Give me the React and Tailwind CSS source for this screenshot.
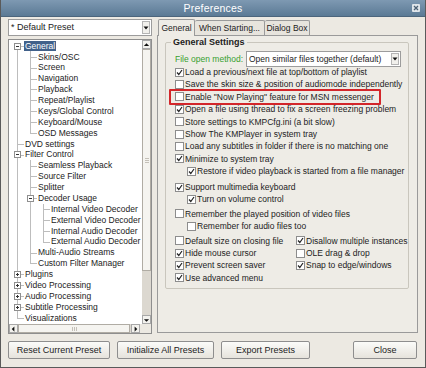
import React from 'react';

const treeData = [
  {
    label: 'General',
    open: true,
    selected: true,
    children: ['Skins/OSC', 'Screen', 'Navigation', 'Playback', 'Repeat/Playlist', 'Keys/Global Control', 'Keyboard/Mouse', 'OSD Messages'],
  },
  { label: 'DVD settings' },
  {
    label: 'Filter Control',
    open: true,
    children: [
      'Seamless Playback',
      'Source Filter',
      'Splitter',
      {
        label: 'Decoder Usage',
        open: true,
        children: ['Internal Video Decoder', 'External Video Decoder', 'Internal Audio Decoder', 'External Audio Decoder'],
      },
      'Multi-Audio Streams',
      'Custom Filter Manager',
    ],
  },
  { label: 'Plugins', closed: true },
  { label: 'Video Processing', closed: true },
  { label: 'Audio Processing', closed: true },
  { label: 'Subtitle Processing', closed: true },
  { label: 'Visualizations' },
];

// flatten the tree into rows, keeping which ancestor lines continue
function flatten(nodes, trail = [], out = []) {
  nodes.forEach((n, i) => {
    const node = typeof n === 'string' ? { label: n } : n;
    const last = i === nodes.length - 1;
    out.push({ ...node, trail, last, first: trail.length === 0 && i === 0 });
    if (node.open && node.children) flatten(node.children, [...trail, !last], out);
  });
  return out;
}

const rows = flatten(treeData);

function TreeRow({ row }) {
  return (
    <div className="flex h-[10.88px] items-stretch">
      {row.trail.map((more, i) => (
        <span key={i} className="relative w-[13px] shrink-0">
          {more && <span className="absolute left-[6px] top-0 bottom-0 border-l border-[#bdbdbd]" />}
        </span>
      ))}
      <span className="relative w-[13px] shrink-0">
        <span
          className={`absolute left-[6px] border-l border-[#bdbdbd] ${row.first ? 'top-1/2' : 'top-0'} ${row.last ? 'h-1/2' : 'bottom-0'}`}
        />
        <span className="absolute left-[6px] top-1/2 w-[7px] border-t border-[#bdbdbd]" />
        {(row.open || row.closed) && (
          <span className="absolute left-[3px] top-[2px] w-[7px] h-[7px] border border-[#8f8f8f] bg-white flex items-center justify-center">
            <span className="relative w-[3px] h-[3px] flex items-center justify-center">
              <span className="w-[3px] h-px bg-[#333]" />
              {row.closed && <span className="absolute w-px h-[3px] bg-[#333]" />}
            </span>
          </span>
        )}
      </span>
      <span
        className={`flex items-center px-[1px] whitespace-nowrap leading-none ${row.selected ? 'bg-[#41618a] text-white' : 'text-[#222]'}`}
      >
        {row.label}
      </span>
    </div>
  );
}

function Arrow({ dir }) {
  const paths = {
    up: 'M1 5 L4 2 L7 5 Z',
    down: 'M1 3 L4 6 L7 3 Z',
    left: 'M5 1 L2 4 L5 7 Z',
    right: 'M3 1 L6 4 L3 7 Z',
  };
  return (
    <span className="w-[9px] h-[9px] shrink-0 bg-[#f3f2ee] border border-[#a8a8a8] flex items-center justify-center">
      <svg width="8" height="8" viewBox="0 0 8 8">
        <path d={paths[dir]} fill="#111" />
      </svg>
    </span>
  );
}

function Check({ checked }) {
  return (
    <span className="w-[9px] h-[9px] shrink-0 border border-[#8d8d8d] bg-white flex items-center justify-center">
      {checked && (
        <svg width="7" height="7" viewBox="0 0 7 7">
          <path d="M1 3.5 L2.8 5.5 L6 1" fill="none" stroke="#222" strokeWidth="1.2" />
        </svg>
      )}
    </span>
  );
}

function Option({ label, checked, indent }) {
  return (
    <div className={`flex items-center h-[12.4px] gap-[1px] ${indent ? 'pl-[12px]' : ''}`}>
      <Check checked={checked} />
      <span className="whitespace-nowrap leading-none">{label}</span>
    </div>
  );
}

function Button({ children, width }) {
  return (
    <button
      className={`${width} h-[18px] rounded-[2px] border border-[#8e8e8e] bg-gradient-to-b from-[#fbfbf9] to-[#e6e3dc] text-[#222] leading-none`}
    >
      {children}
    </button>
  );
}

function DropArrow({ h }) {
  return (
    <span className={`w-[8px] ${h} mr-[1px] border border-[#b4b4b4] bg-[#f1f0ec] flex items-center justify-center shrink-0`}>
      <svg width="6" height="4" viewBox="0 0 6 4">
        <path d="M0.5 0.5 L5.5 0.5 L3 3.5 Z" fill="#111" />
      </svg>
    </span>
  );
}

export default function App() {
  return (
    <div className="w-[426px] h-[368px] flex flex-col bg-[#ece9e2] border-x border-b border-[#5a5a5a] font-['Liberation_Sans',Arial,sans-serif] text-[8.5px] text-[#222] overflow-hidden">
      {/* Title bar */}
      <div className="h-[17px] shrink-0 flex items-center justify-center relative bg-gradient-to-b from-[#7e99b2] to-[#5b7a95] border-b border-[#4c657c]">
        <span className="text-white text-[10.5px] leading-none tracking-[0.2px]">Preferences</span>
        <span className="absolute right-[5px] top-[4px] w-[8px] h-[8px] rounded-[1px] bg-[#dfe5ea] flex items-center justify-center">
          <svg width="6" height="6" viewBox="0 0 6 6">
            <path d="M1 1 L5 5 M5 1 L1 5" stroke="#4b6074" strokeWidth="1.3" />
          </svg>
        </span>
      </div>

      <div className="flex pl-[7px] pt-[2px] gap-[5px]">
        {/* Left column */}
        <div className="w-[144px] flex flex-col">
          <div className="h-[17px] flex items-center border border-[#9c9c9c] bg-white">
            <span className="flex-1 pl-[2px] text-[9px] leading-none">* Default Preset</span>
            <DropArrow h="h-[13px]" />
          </div>

          <div className="mt-[3px] h-[295px] border border-[#8e8e8e] bg-white flex flex-col">
            <div className="flex flex-1 min-h-0">
              <div className="flex-1 pl-[2px] pt-[0.5px] overflow-hidden">
                {rows.map((r, i) => (
                  <TreeRow key={i} row={r} />
                ))}
              </div>
              <div className="w-[9px] flex flex-col bg-[#dcd8d0]">
                <Arrow dir="up" />
                <div className="h-[222px] border border-[#b0aca4] bg-[#f5f4f0] flex items-center justify-center">
                  <span className="flex flex-col gap-[1px]">
                    <span className="w-[4px] h-px bg-[#c4c0b8]" />
                    <span className="w-[4px] h-px bg-[#c4c0b8]" />
                    <span className="w-[4px] h-px bg-[#c4c0b8]" />
                  </span>
                </div>
                <div className="flex-1" />
                <Arrow dir="down" />
              </div>
            </div>
            <div className="h-[9px] flex bg-[#dcd8d0]">
              <Arrow dir="left" />
              <div className="w-[112px] border border-[#b0aca4] bg-[#f5f4f0] flex items-center justify-center">
                <span className="flex gap-[1px]">
                  <span className="w-px h-[4px] bg-[#c4c0b8]" />
                  <span className="w-px h-[4px] bg-[#c4c0b8]" />
                  <span className="w-px h-[4px] bg-[#c4c0b8]" />
                </span>
              </div>
              <div className="flex-1" />
              <Arrow dir="right" />
              <div className="w-[11px] bg-[#ece9e2]" />
            </div>
          </div>
        </div>

        {/* Right column */}
        <div className="w-[261px] flex flex-col">
          <div className="h-[16px] flex items-end pl-[1px] text-[8.5px]">
            <div className="w-[37px] h-[17px] -mb-[1px] relative z-10 border border-b-0 border-[#9a9a9a] rounded-t-[2px] bg-[#eeece6] flex items-center justify-center">
              General
            </div>
            <div className="w-[70px] h-[15px] border border-b-0 border-l-0 border-[#9a9a9a] rounded-t-[2px] bg-[#e7e4dd] flex items-center justify-center whitespace-nowrap">
              When Starting...
            </div>
            <div className="w-[45px] h-[15px] border border-b-0 border-l-0 border-[#9a9a9a] rounded-t-[2px] bg-[#e7e4dd] flex items-center justify-center whitespace-nowrap">
              Dialog Box
            </div>
          </div>

          <div className="h-[298px] border border-[#9a9a9a] bg-[#eeece6] pl-[7px] pr-[9px] pt-[1px]">
            <fieldset className="h-[252px] border border-[#c9c6bd] rounded-[2px] pl-[9px]">
              <legend className="ml-[-4px] px-[2px] font-bold text-[9px] leading-[11px]">General Settings</legend>

              <div className="flex items-center h-[16px] mt-[3px]">
                <span className="w-[71px] text-[#36a02e] whitespace-nowrap leading-none">File open method:</span>
                <div className="w-[155px] h-[16px] flex items-center border border-[#9c9c9c] bg-white">
                  <span className="flex-1 pl-[2px] whitespace-nowrap leading-none">Open similar files together (default)</span>
                  <DropArrow h="h-[12px]" />
                </div>
              </div>

              <div className="flex flex-col -mt-[1px]">
                <Option checked label="Load a previous/next file at top/bottom of playlist" />
                <Option label="Save the skin size & position of audiomode independently" />
                <div className="relative self-start">
                  <Option label={'Enable "Now Playing" feature for MSN messenger'} />
                  <span className="absolute left-[-6px] right-[-7px] top-[-2px] bottom-[-2px] border-2 border-[#d3262a] rounded-[1px]" />
                </div>
                <Option checked label="Open a file using thread to fix a screen freezing problem" />
                <Option label="Store settings to KMPCfg.ini (a bit slow)" />
                <Option label="Show The KMPlayer in system tray" />
                <Option label="Load any subtitles in folder if there is no matching one" />
                <Option checked label="Minimize to system tray" />
                <Option checked indent label="Restore if video playback is started from a file manager" />
              </div>

              <div className="flex flex-col mt-[3.5px]">
                <Option checked label="Support multimedia keyboard" />
                <Option checked indent label="Turn on volume control" />
              </div>

              <div className="flex flex-col mt-[2px]">
                <Option label="Remember the played position of video files" />
                <Option indent label="Remember for audio files too" />
              </div>

              <div className="flex mt-[2px]">
                <div className="w-[121px] flex flex-col">
                  <Option label="Default size on closing file" />
                  <Option checked label="Hide mouse cursor" />
                  <Option checked label="Prevent screen saver" />
                  <Option checked label="Use advanced menu" />
                </div>
                <div className="flex flex-col">
                  <Option checked label="Disallow multiple instances" />
                  <Option label="OLE drag & drop" />
                  <Option checked label="Snap to edge/windows" />
                </div>
              </div>
            </fieldset>
          </div>
        </div>
      </div>

      {/* Bottom buttons */}
      <div className="flex pl-[7px] pr-[8px] mt-[7px] gap-[7px] text-[9px]">
        <Button width="w-[102px]">Reset Current Preset</Button>
        <Button width="w-[97px]">Initialize All Presets</Button>
        <Button width="w-[89px]">Export Presets</Button>
        <div className="ml-auto">
          <Button width="w-[64px]">Close</Button>
        </div>
      </div>
    </div>
  );
}
